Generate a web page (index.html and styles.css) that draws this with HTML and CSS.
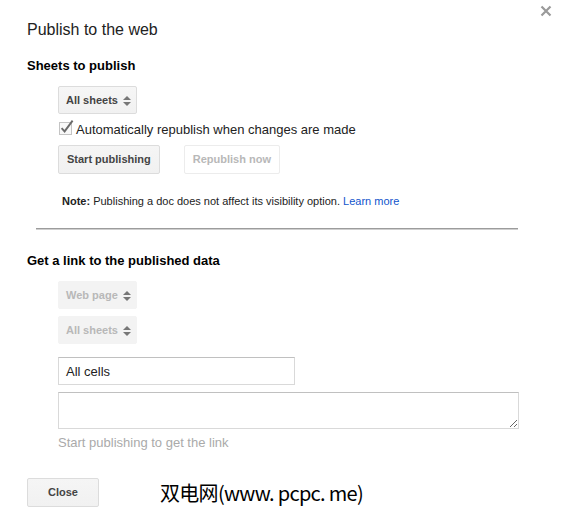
FILE: index.html
```html
<!DOCTYPE html>
<html lang="en">
<head>
<meta charset="utf-8">
<title>Publish to the web</title>
<link rel="stylesheet" href="styles.css">
</head>
<body>
<div class="dialog">
  <span class="close-x" aria-label="Close">
    <svg width="12" height="12" viewBox="0 0 12 12"><path d="M1.5 1.5 L10.5 10.5 M10.5 1.5 L1.5 10.5" stroke="#9a9a9a" stroke-width="2.2" fill="none"/></svg>
  </span>
  <h1 class="title">Publish to the web</h1>

  <section class="section">
    <h2 class="sec-title">Sheets to publish</h2>
    <div class="indent">
      <div class="select">All sheets
        <svg class="arrows" width="8" height="10" viewBox="0 0 8 10"><path d="M0 4 L4 0 L8 4 Z M0 6 L8 6 L4 10 Z" fill="#777"/></svg>
      </div>
      <div class="check-row">
        <svg class="checkbox" width="16" height="16" viewBox="0 0 16 16">
          <rect x="1.5" y="3.5" width="12" height="12" fill="#f8f8f8" stroke="#c4c4c4"/>
          <path d="M3.6 9.2 L6.6 12.4 L14.6 1.6" stroke="#6a6a6a" stroke-width="1.9" fill="none"/>
        </svg>
        <span>Automatically republish when changes are made</span>
      </div>
      <div class="buttons">
        <span class="btn">Start publishing</span>
        <span class="btn btn-disabled">Republish now</span>
      </div>
      <p class="note"><b>Note:</b> Publishing a doc does not affect its visibility option. <a href="#">Learn more</a></p>
    </div>
  </section>

  <div class="rule"></div>

  <section class="section">
    <h2 class="sec-title sec-title-2">Get a link to the published data</h2>
    <div class="indent">
      <div class="select select-disabled">Web page
        <svg class="arrows" width="8" height="10" viewBox="0 0 8 10"><path d="M0 4 L4 0 L8 4 Z M0 6 L8 6 L4 10 Z" fill="#777"/></svg>
      </div>
      <div class="select select-disabled select-second">All sheets
        <svg class="arrows" width="8" height="10" viewBox="0 0 8 10"><path d="M0 4 L4 0 L8 4 Z M0 6 L8 6 L4 10 Z" fill="#777"/></svg>
      </div>
      <div class="input">All cells</div>
      <textarea class="textarea"></textarea>
      <p class="hint">Start publishing to get the link</p>
    </div>
  </section>

  <div class="footer">
    <span class="btn btn-close">Close</span>
    <span class="watermark">双电网(www. pcpc. me)</span>
  </div>
</div>
</body>
</html>
```
FILE: styles.css
```css
* { box-sizing: border-box; }
html, body { margin: 0; padding: 0; background: #fff; }
body {
  font-family: "Liberation Sans", Arial, sans-serif;
  color: #222;
  width: 563px;
  height: 516px;
  overflow: hidden;
}
.dialog {
  position: relative;
  padding: 20px 0 0 27px;
}
.close-x {
  position: absolute;
  top: 5px;
  left: 540px;
  width: 12px;
  height: 12px;
  display: block;
}
.close-x svg { display: block; }
.title {
  margin: 0;
  font-size: 16px;
  line-height: 20px;
  font-weight: normal;
  color: #222;
}
.section { margin: 0; }
.sec-title {
  margin: 18px 0 0;
  font-size: 13px;
  line-height: 16px;
  font-weight: bold;
  color: #000;
}
.sec-title-2 { margin-top: 23px; }
.indent {
  padding-left: 31px;
  display: flex;
  flex-direction: column;
  align-items: flex-start;
}
.select {
  margin-top: 12px;
  height: 28px;
  width: 79px;
  border: 1px solid #dcdcdc;
  border-radius: 2px;
  background: linear-gradient(#f6f6f6, #f1f1f1);
  color: #444;
  font-size: 11px;
  font-weight: bold;
  line-height: 26px;
  padding: 0 5px 0 7px;
  display: flex;
  align-items: center;
  justify-content: space-between;
  white-space: nowrap;
}
.select-disabled {
  border-color: #f3f3f3;
  background: #f3f3f3;
  color: #b8b8b8;
}
.select-second { margin-top: 7px; }
.arrows { display: block; margin-top: 1px; }
.check-row {
  margin-top: 8px;
  display: flex;
  align-items: flex-start;
  font-size: 13px;
  line-height: 16px;
  color: #222;
}
.checkbox {
  display: block;
  margin-top: -3px;
  margin-right: 2px;
}
.buttons {
  margin-top: 7px;
  display: flex;
  gap: 24px;
}
.btn {
  display: inline-block;
  height: 29px;
  min-width: 72px;
  padding: 0 8px;
  border: 1px solid #dcdcdc;
  border-radius: 2px;
  background: linear-gradient(#f5f5f5, #f1f1f1);
  color: #444;
  font-size: 11px;
  font-weight: bold;
  line-height: 27px;
  text-align: center;
  white-space: nowrap;
}
.btn-disabled {
  background: #fff;
  border-color: #ececec;
  color: #b8b8b8;
}
.note {
  margin: 20px 0 0;
  padding-left: 4px;
  font-size: 11px;
  line-height: 14px;
  color: #222;
}
.note b { color: #222; }
.note a { color: #15c; text-decoration: none; }
.rule {
  margin: 20px 0 0 9px;
  width: 482px;
  height: 2px;
  border-top: 1px solid #9c9c9c;
  border-bottom: 1px solid #cfcfcf;
}
.input {
  margin-top: 13px;
  width: 237px;
  height: 28px;
  border: 1px solid #d9d9d9;
  border-top-color: #c0c0c0;
  padding: 1px 7px 0;
  font-size: 13px;
  line-height: 26px;
  color: #222;
}
.textarea {
  display: block;
  margin: 7px 0 0;
  width: 461px;
  height: 37px;
  border: 1px solid #d9d9d9;
  border-top-color: #c0c0c0;
  border-radius: 0;
  padding: 0;
  resize: both;
  background: #fff;
  font-family: "Liberation Sans", Arial, sans-serif;
  outline: none;
}
.hint {
  margin: 5.5px 0 0;
  font-size: 13px;
  line-height: 16px;
  color: #aaa;
}
.footer {
  margin-top: 27.5px;
  display: flex;
  align-items: center;
}
.btn-close { width: 72px; }
.watermark {
  margin-left: 61px;
  font-family: "Noto Sans CJK SC", "Liberation Sans", sans-serif;
  font-size: 20px;
  line-height: 24px;
  letter-spacing: -0.7px;
  color: #000;
  white-space: nowrap;
}
```
